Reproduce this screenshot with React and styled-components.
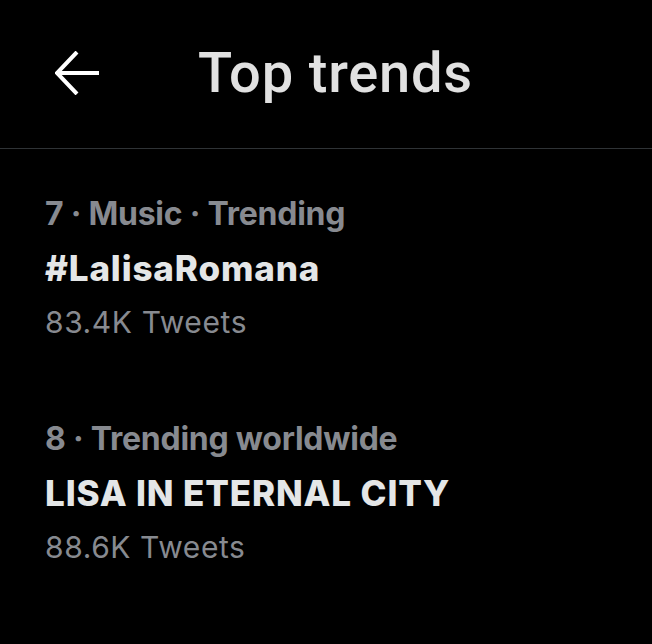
import React from 'react'
import styled, { createGlobalStyle } from 'styled-components'

const GlobalStyle = createGlobalStyle`
    html, body {
        margin: 0;
        padding: 0;
        background: #000000;
    }
    body {
        width: 652px;
        height: 644px;
        overflow: hidden;
    }
`

const Page = styled.div`
    width: 652px;
    min-height: 644px;
    background: #000000;
    display: flex;
    flex-direction: column;
`

const Header = styled.header`
    height: 149px;
    box-sizing: border-box;
    padding: 0 0 3px 55px;
    display: flex;
    align-items: center;
    border-bottom: 1px solid #2f3336;
`

const BackButton = styled.button`
    width: 44px;
    height: 44px;
    padding: 0;
    margin: 0 99px 0 0;
    border: none;
    background: none;
    display: flex;
    align-items: center;
    justify-content: center;
    cursor: pointer;
`

const Title = styled.h1`
    margin: 0;
    font-family: Roboto, 'Noto Sans', sans-serif;
    font-size: 56px;
    line-height: 56px;
    font-weight: 500;
    letter-spacing: 0.8px;
    color: #e1e1e1;
`

const List = styled.div`
    padding-top: 6px;
    display: flex;
    flex-direction: column;
`

const Item = styled.div`
    padding: 32px 45px 31px;
    display: flex;
    flex-direction: column;
`

const Meta = styled.div`
    font-family: Inter, 'Liberation Sans', sans-serif;
    font-size: 32px;
    line-height: 54px;
    font-weight: 700;
    letter-spacing: -0.25px;
    color: #878a90;
    white-space: nowrap;
`

const Name = styled.div`
    font-family: Inter, 'Liberation Sans', sans-serif;
    font-size: 35px;
    line-height: 54px;
    font-weight: 800;
    letter-spacing: 0.85px;
    color: #e4e6e7;
    white-space: nowrap;
`

const Count = styled.div`
    font-family: Inter, 'Liberation Sans', sans-serif;
    font-size: 30px;
    line-height: 54px;
    font-weight: 400;
    letter-spacing: 0.6px;
    color: #878a90;
    white-space: nowrap;
`

const trends = [
    { meta: '7 · Music · Trending', name: '#LalisaRomana', count: '83.4K Tweets' },
    { meta: '8 · Trending worldwide', name: 'LISA IN ETERNAL CITY', count: '88.6K Tweets' },
]

const ArrowIcon = () => (
    <svg width="44" height="44" viewBox="0 0 44 44" fill="none">
        <path d="M3 22 H44" stroke="#ffffff" strokeWidth="4" />
        <path d="M22 1 L2 22 L22 43" stroke="#ffffff" strokeWidth="4" strokeLinejoin="miter" />
    </svg>
)

const App = () => {
    return (
        <Page>
            <GlobalStyle />
            <Header>
                <BackButton aria-label="Back">
                    <ArrowIcon />
                </BackButton>
                <Title>Top trends</Title>
            </Header>
            <List>
                {trends.map((trend) => (
                    <Item key={trend.name}>
                        <Meta>{trend.meta}</Meta>
                        <Name>{trend.name}</Name>
                        <Count>{trend.count}</Count>
                    </Item>
                ))}
            </List>
        </Page>
    )
}

export default App
